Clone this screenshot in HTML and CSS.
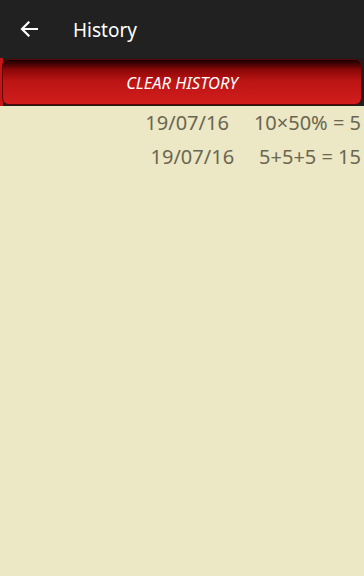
FILE: index.html
```html
<!DOCTYPE html>
<html>
<head>
<meta charset="utf-8">
<link rel="stylesheet" href="styles.css">
</head>
<body>
<div class="app">
  <header class="toolbar">
    <svg class="back" width="18" height="16" viewBox="0 0 18 16">
      <path d="M17 8H2.5M8.5 1.5L2 8l6.5 6.5" fill="none" stroke="#fff" stroke-width="2.2" stroke-linecap="square"/>
    </svg>
    <h1 class="title">History</h1>
  </header>
  <div class="clear-bar">
    <button class="clear-btn">CLEAR HISTORY</button>
  </div>
  <ul class="history">
    <li class="row"><span class="date">19/07/16</span><span class="expr">10×50% = 5</span></li>
    <li class="row"><span class="date">19/07/16</span><span class="expr">5+5+5 = 15</span></li>
  </ul>
</div>
</body>
</html>
```
FILE: styles.css
```css
html, body {
  margin: 0;
  padding: 0;
  height: 100%;
}
body {
  font-family: "Noto Sans", "Open Sans", sans-serif;
  background: #ece7c4;
}
.app {
  display: flex;
  flex-direction: column;
  height: 576px;
  overflow: hidden;
}
.toolbar {
  height: 58px;
  background: #212121;
  display: flex;
  align-items: center;
  padding-left: 20px;
  box-sizing: border-box;
}
.back {
  display: block;
}
.title {
  margin: 0 0 0 35px;
  font-size: 19px;
  font-weight: normal;
  color: #fff;
  line-height: 1;
  padding-top: 2px;
}
.clear-bar {
  background: linear-gradient(to right, #c41616 0 3px, #1e1e1e 3px);
  padding: 1px 2px 1px 2px;
}
.clear-btn {
  display: block;
  width: 100%;
  height: 46px;
  border: 1px solid #5e0606;
  border-radius: 7px;
  background: linear-gradient(to bottom, #160000 0%, #8a0707 22%, #bc1414 48%, #d21d1d 100%);
  color: #fff;
  font-family: "Noto Sans", "Open Sans", sans-serif;
  font-style: italic;
  font-size: 16.5px;
  padding: 0;
}
.history {
  list-style: none;
  margin: -1px 0 0 0;
  padding: 0 3px 0 0;
}
.row {
  display: flex;
  justify-content: flex-end;
  gap: 25px;
  height: 34px;
  align-items: center;
  font-size: 20px;
  color: #6a6652;
}
```
